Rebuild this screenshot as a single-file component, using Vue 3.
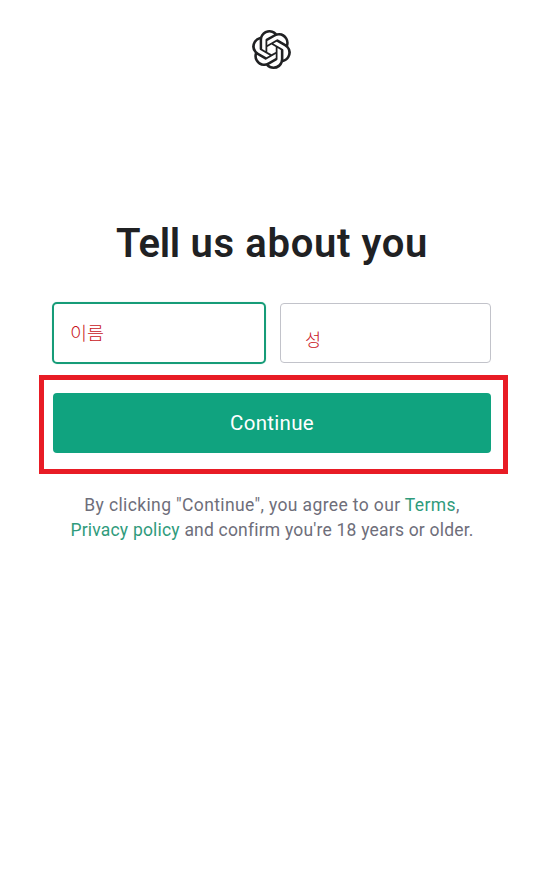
<script setup>
import { ref } from 'vue'

const firstName = ref('이름')
const lastName = ref('성')
</script>

<template>
  <main class="page">
    <svg class="logo" viewBox="0 0 24 24" role="img" aria-label="OpenAI">
      <path d="M22.2819 9.8211a5.9847 5.9847 0 0 0-.5157-4.9108 6.0462 6.0462 0 0 0-6.5098-2.9A6.0651 6.0651 0 0 0 4.9807 4.1818a5.9847 5.9847 0 0 0-3.9977 2.9 6.0462 6.0462 0 0 0 .7427 7.0966 5.98 5.98 0 0 0 .511 4.9107 6.051 6.051 0 0 0 6.5146 2.9001A5.9847 5.9847 0 0 0 13.2599 24a6.0557 6.0557 0 0 0 5.7718-4.2058 5.9894 5.9894 0 0 0 3.9977-2.9001 6.0557 6.0557 0 0 0-.7475-7.0729zm-9.022 12.6081a4.4755 4.4755 0 0 1-2.8764-1.0408l.1419-.0804 4.7783-2.7582a.7948.7948 0 0 0 .3927-.6813v-6.7369l2.02 1.1686a.071.071 0 0 1 .038.052v5.5826a4.504 4.504 0 0 1-4.4945 4.4944zm-9.6607-4.1254a4.4708 4.4708 0 0 1-.5346-3.0137l.142.0852 4.783 2.7582a.7712.7712 0 0 0 .7806 0l5.8428-3.3685v2.3324a.0804.0804 0 0 1-.0332.0615L9.74 19.9502a4.4992 4.4992 0 0 1-6.1408-1.6464zM2.3408 7.8956a4.485 4.485 0 0 1 2.3655-1.9728V11.6a.7664.7664 0 0 0 .3879.6765l5.8144 3.3543-2.0201 1.1685a.0757.0757 0 0 1-.071 0l-4.8303-2.7865A4.504 4.504 0 0 1 2.3408 7.872zm16.5963 3.8558L13.1038 8.364 15.1192 7.2a.0757.0757 0 0 1 .071 0l4.8303 2.7913a4.4944 4.4944 0 0 1-.6765 8.1042v-5.6772a.79.79 0 0 0-.407-.667zm2.0107-3.0231l-.142-.0852-4.7735-2.7818a.7759.7759 0 0 0-.7854 0L9.409 9.2297V6.8974a.0662.0662 0 0 1 .0284-.0615l4.8303-2.7866a4.4992 4.4992 0 0 1 6.6802 4.66zM8.3065 12.863l-2.02-1.1638a.0804.0804 0 0 1-.038-.0567V6.0742a4.4992 4.4992 0 0 1 7.3757-3.4537l-.142.0805L8.704 5.459a.7948.7948 0 0 0-.3927.6813zm1.0976-2.3654l2.602-1.4998 2.6069 1.4998v2.9994l-2.5974 1.4997-2.6067-1.4997Z" />
    </svg>
    <h1 class="title"><span class="title-start">Tell</span> us about you</h1>
    <div class="fields">
      <div class="field field-active">{{ firstName }}</div>
      <div class="field field-last">{{ lastName }}</div>
    </div>
    <div class="highlight">
      <button class="continue" type="button">Continue</button>
    </div>
    <p class="terms">
      <span class="line line-one">By clicking "Continue", you agree to our <a class="link">Terms</a>,</span>
      <span class="line line-two"><a class="link">Privacy policy</a> and confirm you're 18 years or older.</span>
    </p>
  </main>
</template>

<style>
body {
  margin: 0;
  background: #fff;
}
</style>

<style scoped>
.page {
  box-sizing: border-box;
  width: 540px;
  height: 875px;
  padding: 30px 32px 0 39px;
  display: flex;
  flex-direction: column;
  font-family: Roboto, "Noto Sans CJK KR", sans-serif;
  background: #fff;
}
.logo {
  width: 39px;
  height: 39px;
  margin: 0 0 1px 213px;
  fill: #202123;
}
.title {
  margin: 150px 0 0;
  padding-right: 3px;
  height: 48px;
  line-height: 48px;
  font-size: 40px;
  font-weight: 600;
  letter-spacing: 0.65px;
  text-align: center;
  white-space: nowrap;
  color: #202123;
}
.title-start {
  letter-spacing: -0.25px;
}
.fields {
  display: flex;
  gap: 14px;
  margin: 34px 0 0 13px;
  height: 62px;
  align-items: center;
}
.field {
  box-sizing: border-box;
  width: 211px;
  height: 60px;
  padding: 13px 0 0 24px;
  border: 1px solid #c2c3ca;
  border-radius: 4px;
  font-family: "Noto Sans CJK KR", sans-serif;
  font-size: 17.5px;
  font-weight: 300;
  line-height: 44px;
  color: #c8141b;
}
.field-active {
  width: 214px;
  height: 62px;
  padding: 6px 0 0 16px;
  border: 2px solid #169c78;
  border-radius: 5px;
  box-shadow: 0 0 1px #10a37f66;
  font-size: 18.5px;
}
.highlight {
  box-sizing: border-box;
  width: 469px;
  height: 99px;
  margin-top: 11px;
  padding: 13px 12px 0 9px;
  border: 5px solid #e81c25;
}
.continue {
  display: block;
  width: 438px;
  height: 60px;
  padding: 0;
  border: 0;
  border-radius: 4px;
  background: #10a37f;
  color: #fff;
  font-family: inherit;
  font-size: 20.5px;
  letter-spacing: 0.3px;
}
.terms {
  margin: 19px 0 0;
  padding-right: 3px;
  font-size: 17.5px;
  line-height: 25px;
  text-align: center;
  white-space: nowrap;
  color: #6e6e7a;
}
.line-one {
  display: block;
  letter-spacing: 0.37px;
}
.line-two {
  display: block;
  letter-spacing: 0.2px;
}
.link {
  color: #2f9b7c;
}
</style>
